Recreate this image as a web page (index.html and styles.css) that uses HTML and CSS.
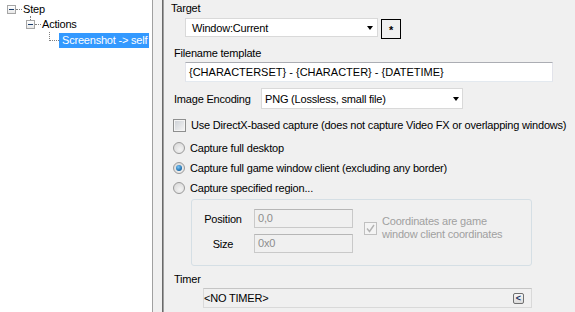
FILE: index.html
```html
<!DOCTYPE html>
<html lang="en">

<head>
    <meta charset="UTF-8">
    <title>Screenshot action</title>
    <link rel="stylesheet" href="styles.css">
</head>

<body>
    <div class="app">
        <!-- tree on the left -->
        <div class="tree">
            <div class="node lvl0"><span class="box"></span><span class="name">Step</span></div>
            <div class="node lvl1"><span class="box"></span><span class="name">Actions</span></div>
            <div class="node lvl2 selected"><span class="name">Screenshot -&gt; self</span></div>
        </div>

        <div class="splitter"></div>

        <!-- properties of the selected action -->
        <div class="panel">
            <div class="label target-label">Target</div>
            <div class="target-row">
                <div class="combo target-combo"><span>Window:Current</span><span class="arrow"></span></div>
                <div class="star-btn">*</div>
            </div>

            <div class="label file-label">Filename template</div>
            <div class="textbox file-box">{CHARACTERSET} - {CHARACTER} - {DATETIME}</div>

            <div class="enc-row">
                <span class="label enc-label">Image Encoding</span>
                <div class="combo enc-combo"><span>PNG (Lossless, small file)</span><span class="arrow"></span></div>
            </div>

            <div class="option check-row">
                <span class="checkbox"></span>
                <span>Use DirectX-based capture (does not capture Video FX or overlapping windows)</span>
            </div>

            <div class="option radio-row first"><span class="radio"></span><span>Capture full desktop</span></div>
            <div class="option radio-row"><span class="radio checked"></span><span>Capture full game window client (excluding any border)</span></div>
            <div class="option radio-row"><span class="radio"></span><span>Capture specified region...</span></div>

            <div class="group">
                <div class="fields">
                    <div class="field">
                        <span class="field-name">Position</span>
                        <div class="textbox disabled">0,0</div>
                    </div>
                    <div class="field">
                        <span class="field-name">Size</span>
                        <div class="textbox disabled">0x0</div>
                    </div>
                </div>
                <div class="coord-check">
                    <span class="checkbox disabled-check">
                        <svg width="9" height="9" viewBox="0 0 9 9">
                            <path d="M1 4.5 L3.5 7.5 L8 1" fill="none" stroke="#b3b3b3" stroke-width="1.4" />
                        </svg>
                    </span>
                    <span class="coord-text">Coordinates are game<br>window client coordinates</span>
                </div>
            </div>

            <div class="label timer-label">Timer</div>
            <div class="timer-box">
                <span>&lt;NO TIMER&gt;</span>
                <span class="small-btn">&lt;</span>
            </div>
        </div>
    </div>
</body>

</html>
```

FILE: styles.css
```css
body {
    margin: 0;
    font-family: "Liberation Sans", Arial, sans-serif;
    font-size: 11px;
    letter-spacing: -0.2px;
    color: #000;
    background: #f0f0f0;
    white-space: nowrap;
}

.app {
    display: flex;
    height: 312px;
    overflow: hidden;
}

/* tree */
.tree {
    width: 152px;
    flex-shrink: 0;
    background: #fff;
    border-right: 1px solid #a0a0a0;
    padding-top: 1px;
}

.node {
    position: relative;
    display: flex;
    align-items: center;
    height: 16px;
}

.node .box {
    width: 9px;
    height: 9px;
    box-sizing: border-box;
    border: 1px solid #a5a5a5;
    background: linear-gradient(#fff, #e8e8e8);
    position: relative;
}

.node .box::after {
    content: "";
    position: absolute;
    left: 1px;
    top: 3px;
    width: 5px;
    height: 1px;
    background: #1c3f6e;
}

.node .name {
    margin-left: 7px;
    line-height: 15px;
}

/* dotted joints between box and text */
.node .box::before {
    content: "";
    position: absolute;
    left: 8px;
    top: 3px;
    width: 6px;
    border-top: 1px dotted #808080;
}

.lvl0 {
    padding-left: 7px;
}

.lvl1 {
    padding-left: 26px;
    margin-top: -1px;
}

.lvl1::before {
    content: "";
    position: absolute;
    left: 30px;
    top: 0;
    height: 4px;
    border-left: 1px dotted #808080;
}

.lvl2 {
    padding-left: 59px;
}

.lvl2::before {
    content: "";
    position: absolute;
    left: 49px;
    top: 0;
    height: 8px;
    width: 9px;
    border-left: 1px dotted #808080;
    border-bottom: 1px dotted #808080;
}

.selected .name {
    margin-left: 0;
    background: #3399ff;
    color: #fff;
    padding: 0 2px 0 3px;
    line-height: 15px;
}

.splitter {
    width: 9px;
    flex-shrink: 0;
    background: #f0f0f0;
}

/* right panel */
.panel {
    flex: 1;
    min-width: 0;
    border-left: 1px solid #696969;
    box-shadow: inset 1px 0 0 #a0a0a0;
    padding-left: 7px;
}

.label {
    height: 16px;
    line-height: 16px;
}

.target-label {
    margin-left: 1px;
}

.target-row {
    display: flex;
    margin-top: 2px;
    margin-left: 15px;
    height: 21px;
}

.combo {
    box-sizing: border-box;
    background: #fff;
    border: 1px solid #d9d9d9;
    display: flex;
    align-items: center;
    justify-content: space-between;
    flex-shrink: 0;
}

.arrow {
    width: 0;
    height: 0;
    border-left: 3.5px solid transparent;
    border-right: 3.5px solid transparent;
    border-top: 4px solid #000;
}

.target-combo {
    width: 193px;
    height: 19px;
    padding: 0 4px 0 6px;
}

.star-btn {
    width: 20px;
    height: 20px;
    margin-left: 3px;
    margin-top: 1px;
    box-sizing: border-box;
    border: 1px solid #000;
    text-align: center;
    font-weight: bold;
    line-height: 21px;
    font-size: 11px;
}

.file-label {
    margin-top: 6px;
    margin-left: 4px;
}

.textbox {
    box-sizing: border-box;
    background: #fff;
    border: 1px solid #e2e3ea;
    border-top-color: #abadb3;
    border-bottom-color: #e3e9ef;
}

.file-box {
    margin-left: 15px;
    width: 368px;
    height: 20px;
    line-height: 18px;
    padding-left: 3px;
    margin-top: 1px;
    letter-spacing: 0;
}

.enc-row {
    display: flex;
    align-items: center;
    margin-top: 6px;
    margin-left: 4px;
    height: 21px;
}

.enc-label {
    width: 87px;
}

.enc-combo {
    width: 202px;
    height: 21px;
    padding: 0 3px 0 3px;
}

.option {
    display: flex;
    align-items: center;
    height: 16px;
    margin-left: 3px;
}

.option span {
    flex-shrink: 0;
}

.option span + span {
    margin-left: 5px;
}

.check-row {
    margin-top: 8px;
}

.checkbox {
    width: 13px;
    height: 13px;
    box-sizing: border-box;
    border: 1px solid #8e8f8f;
    background: linear-gradient(135deg, #cbcfd5, #f6f6f6);
    box-shadow: inset 0 0 0 1px #f4f4f4;
    flex-shrink: 0;
}

.radio-row {
    margin-top: 4px;
}

.radio-row.first {
    margin-top: 7px;
}

.radio {
    width: 12px;
    height: 12px;
    box-sizing: border-box;
    border-radius: 50%;
    border: 1px solid #9a9a9a;
    background: radial-gradient(circle at 60% 65%, #f4f4f4, #d4d4d4);
    position: relative;
    flex-shrink: 0;
}

.radio.checked::after {
    content: "";
    position: absolute;
    left: 2px;
    top: 2px;
    width: 6px;
    height: 6px;
    border-radius: 50%;
    background: radial-gradient(circle at 40% 35%, #7cc6f8, #1a6aa8 70%, #0d3f6a);
}

/* region group */
.group {
    margin: 3px 0 0 21px;
    width: 341px;
    height: 67px;
    box-sizing: border-box;
    border: 1px solid #d5dfe5;
    border-radius: 3px;
    display: flex;
    padding-top: 9px;
}

.fields {
    display: flex;
    flex-direction: column;
    gap: 6px;
}

.field {
    display: flex;
    align-items: center;
}

.field-name {
    width: 62px;
    text-align: center;
}

.textbox.disabled {
    background: #f0f0f0;
    border-color: #c9c9c9;
    border-top-color: #b6b6b6;
    color: #8d8d8d;
    width: 99px;
    height: 19px;
    line-height: 17px;
    padding-left: 3px;
}

.coord-check {
    display: flex;
    margin-left: 11px;
    margin-top: 13px;
}

.disabled-check {
    border-color: #c0c0c0;
    background: #f4f4f4;
    box-shadow: none;
    display: flex;
    align-items: center;
    justify-content: center;
}

.coord-text {
    margin-left: 5px;
    margin-top: -7px;
    line-height: 13px;
    color: #a0a0a0;
}

.timer-label {
    margin-top: 5px;
    margin-left: 4px;
}

.timer-box {
    margin: 1px 0 0 33px;
    width: 329px;
    height: 20px;
    box-sizing: border-box;
    border: 1px solid #d9d9d9;
    border-top-color: #c5c5c5;
    display: flex;
    align-items: center;
    justify-content: space-between;
    padding: 0 7px 0 0;
}

.small-btn {
    width: 11px;
    height: 11px;
    box-sizing: border-box;
    border: 1px solid #707070;
    border-radius: 2px;
    background: linear-gradient(#f6f6f6, #dcdcdc);
    font-size: 9px;
    font-weight: bold;
    line-height: 8px;
    text-align: center;
    color: #1b2f5e;
    letter-spacing: 0;
}
```
